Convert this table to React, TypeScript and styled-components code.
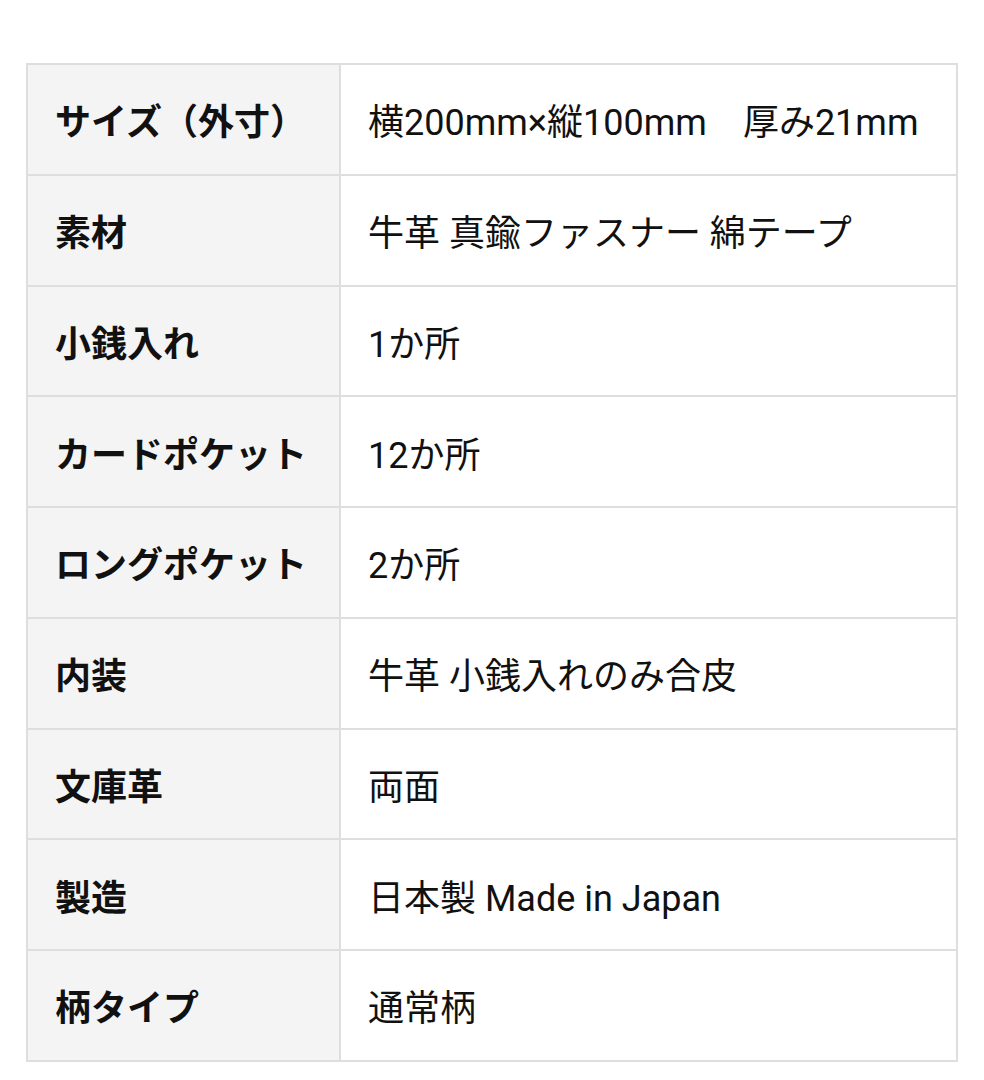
import React from 'react';
import styled, { createGlobalStyle } from 'styled-components';

const rows: [string, string][] = [
  ['サイズ（外寸）', '横200mm×縦100mm　厚み21mm'],
  ['素材', '牛革 真鍮ファスナー 綿テープ'],
  ['小銭入れ', '1か所'],
  ['カードポケット', '12か所'],
  ['ロングポケット', '2か所'],
  ['内装', '牛革 小銭入れのみ合皮'],
  ['文庫革', '両面'],
  ['製造', '日本製 Made in Japan'],
  ['柄タイプ', '通常柄'],
];

const Global = createGlobalStyle`
  body {
    margin: 0;
    background: #fff;
    font-family: Roboto, "Noto Sans CJK JP", sans-serif;
    color: #111;
  }
`;

const Page = styled.div`
  padding: 63px 26px 0;
`;

const Table = styled.table`
  width: 100%;
  border-collapse: collapse;
  border: 2px solid #dedede;
  font-size: 36px;
`;

const Head = styled.th`
  width: 257px;
  height: 108.75px;
  padding: 0 27px;
  text-align: left;
  vertical-align: middle;
  font-weight: 700;
  background: #f4f4f4;
  border: 2px solid #dedede;
  white-space: nowrap;
`;

const Cell = styled.td`
  height: 108.75px;
  padding: 0 27px;
  vertical-align: middle;
  font-weight: 400;
  border: 2px solid #dedede;
  white-space: nowrap;
`;

const App = () => {
  return (
    <>
      <Global />
      <Page>
        <Table>
          <tbody>
            {rows.map(([k, v]) => (
              <tr key={k}>
                <Head>{k}</Head>
                <Cell>{v}</Cell>
              </tr>
            ))}
          </tbody>
        </Table>
      </Page>
    </>
  );
};

export default App;
